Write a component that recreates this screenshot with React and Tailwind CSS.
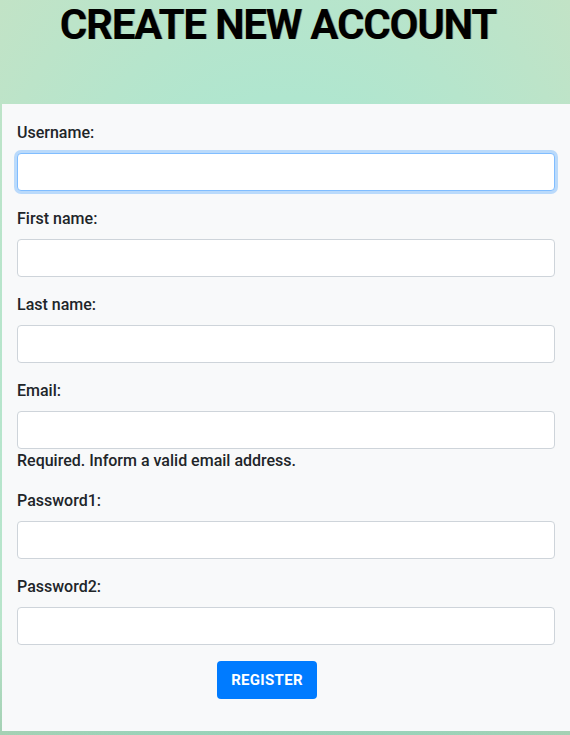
import React from 'react';

const fields = [
  { id: 'username', label: 'Username:', focused: true },
  { id: 'first_name', label: 'First name:' },
  { id: 'last_name', label: 'Last name:' },
  { id: 'email', label: 'Email:', help: 'Required. Inform a valid email address.' },
  { id: 'password1', label: 'Password1:', type: 'password' },
  { id: 'password2', label: 'Password2:', type: 'password' },
];

export default function App() {
  return (
    <div className="min-h-[735px] bg-[linear-gradient(to_bottom,transparent_85%,rgba(20,90,50,0.14)),radial-gradient(ellipse_at_50%_60%,#a3e2c9_0%,#b0e6cf_55%,#c2e3c6_100%)] font-['Roboto',sans-serif] text-[#212529]">
      {/* Header */}
      <div className="h-[104px] pt-[2px]">
        <h1 className="pr-[14px] text-center text-[42px] font-bold leading-[46px] tracking-[-1.25px] text-black [text-shadow:1px_0_0_rgba(120,60,0,0.35)]">
          CREATE NEW ACCOUNT
        </h1>
      </div>

      {/* Form card */}
      <div className="ml-[2px] bg-[#f8f9fa] px-[15px] pt-[17px] pb-[32px]">
        <form onSubmit={(e) => e.preventDefault()}>
          {fields.map((f) => (
            <div key={f.id} className="mb-4">
              <label htmlFor={f.id} className="mb-2 block text-[16px] font-medium leading-[24px]">
                {f.label}
              </label>
              <input
                id={f.id}
                type={f.type || 'text'}
                className={
                  f.focused
                    ? 'block h-[38px] w-full rounded-[4px] border border-[#80bdff] bg-white px-3 outline-none ring-[3px] ring-[#007bff]/25'
                    : 'block h-[38px] w-full rounded-[4px] border border-[#ced4da] bg-white px-3 outline-none'
                }
              />
              {f.help && (
                <div className="text-[16px] font-medium leading-[24px]">{f.help}</div>
              )}
            </div>
          ))}
          <div className="pl-[200px]">
            <button
              type="submit"
              className="h-[38px] w-[100px] rounded-[4px] bg-[#007bff] text-[15px] font-bold uppercase tracking-[0.3px] text-white"
            >
              Register
            </button>
          </div>
        </form>
      </div>
    </div>
  );
}
